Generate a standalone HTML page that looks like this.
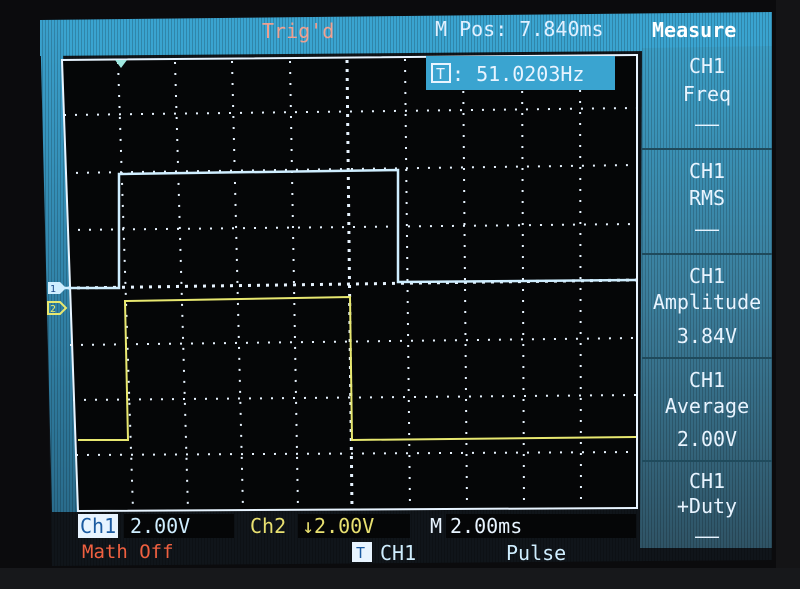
<!DOCTYPE html>
<html><head><meta charset="utf-8"><style>
html,body{margin:0;padding:0;background:#0a0a0c;}
svg{display:block}
text{font-family:"DejaVu Sans Mono","Liberation Mono",monospace;}
</style></head><body>
<svg width="800" height="589" viewBox="0 0 800 589" xmlns="http://www.w3.org/2000/svg">
<defs>
<linearGradient id="rp" x1="0" y1="0" x2="0" y2="1">
<stop offset="0" stop-color="#3a9cc4"/><stop offset="0.5" stop-color="#3b7e9c"/><stop offset="1" stop-color="#2f5466"/>
</linearGradient>
<linearGradient id="lp" x1="0" y1="0" x2="0" y2="1">
<stop offset="0" stop-color="#3aa0cc"/><stop offset="1" stop-color="#2a6c8c"/>
</linearGradient>
<pattern id="scan" width="3" height="4" patternUnits="userSpaceOnUse"><rect width="1" height="4" fill="#000" opacity="0.18"/></pattern>
</defs>
<rect width="800" height="589" fill="#0b0b0d"/>
<rect x="776" y="0" width="24" height="589" fill="#141416"/>
<rect x="0" y="568" width="800" height="21" fill="#17181b"/>
<!-- screen -->
<polygon points="40,20 772,12 772,560 52,566" fill="#10151a"/>
<polygon points="40,20 772,12 772,50 40,56" fill="#3aa4d0"/>
<polygon points="40,20 62,20 78,512 52,512" fill="url(#lp)"/>
<polygon points="642,48 772,46 772,548 640,548" fill="url(#rp)"/>
<polygon points="40,20 772,12 772,560 52,566" fill="url(#scan)"/>
<g stroke="#1f4a5c" stroke-width="2">
<line x1="642" y1="149" x2="772" y2="149"/><line x1="642" y1="254" x2="772" y2="254"/>
<line x1="642" y1="358" x2="772" y2="358"/><line x1="642" y1="461" x2="772" y2="461"/>
</g>
<!-- plot -->
<polygon points="62,60 637,55 637,508 78,511" fill="#050607" stroke="#e8f4ff" stroke-width="2"/>
<g stroke="#e8f4ff" stroke-width="2" stroke-dasharray="2 9" fill="none">
<line x1="118" y1="62" x2="133" y2="510"/><line x1="175" y1="62" x2="188" y2="510"/>
<line x1="232" y1="61" x2="243" y2="510"/><line x1="290" y1="61" x2="298" y2="510"/>
<line x1="405" y1="59" x2="410" y2="509"/><line x1="463" y1="58" x2="467" y2="509"/>
<line x1="522" y1="58" x2="524" y2="509"/><line x1="580" y1="57" x2="581" y2="509"/>
<line x1="64" y1="115" x2="636" y2="108"/><line x1="65" y1="173" x2="636" y2="165"/>
<line x1="67" y1="230" x2="636" y2="224"/><line x1="70" y1="345" x2="636" y2="338"/>
<line x1="73" y1="400" x2="636" y2="395"/><line x1="76" y1="455" x2="636" y2="452"/>
</g>
<g stroke="#e8f4ff" stroke-width="3" stroke-dasharray="3 6" fill="none">
<line x1="347" y1="60" x2="352" y2="509"/><line x1="68" y1="288" x2="636" y2="280"/>
</g>
<polyline points="64,288 119,288 119,174 398,170 398,282 636,280" fill="none" stroke="#cfeeff" stroke-width="2.5"/>
<polyline points="78,440 128,440 125,301 350,297 352,440 636,437" fill="none" stroke="#e8e870" stroke-width="2"/>
<polygon points="115,60 127,60 121,68" fill="#9fe8e0"/>
<polygon points="48,282 60,282 66,288 60,294 48,294" fill="#cfeeff"/>
<text x="50" y="292" font-size="10" fill="#1a4a8a">1</text>
<polygon points="48,302 60,302 66,308 60,314 48,314" fill="none" stroke="#e8e870" stroke-width="2"/>
<text x="50" y="312" font-size="10" fill="#e8e870">2</text>
<rect x="426" y="56" width="189" height="34" fill="#3aa4d0"/>
<rect x="432" y="64" width="18" height="18" fill="none" stroke="#e8f4ff" stroke-width="2"/>
<text x="436" y="79" font-size="15" fill="#e8f4ff">T</text>
<text x="452" y="81" font-size="20" fill="#e8f4ff">: 51.0203Hz</text>
<text x="262" y="38" font-size="20" fill="#f0a090">Trig'd</text>
<text x="435" y="36" font-size="20" fill="#e0f0ff">M Pos: 7.840ms</text>
<text x="652" y="37" font-size="20" font-weight="bold" fill="#ffffff">Measure</text>
<g font-size="20" fill="#e8f4ff" text-anchor="middle">
<text x="707" y="73">CH1</text><text x="707" y="101">Freq</text><text x="707" y="131">——</text>
<text x="707" y="178">CH1</text><text x="707" y="205">RMS</text><text x="707" y="236">——</text>
<text x="707" y="283">CH1</text><text x="707" y="309">Amplitude</text><text x="707" y="343">3.84V</text>
<text x="707" y="387">CH1</text><text x="707" y="413">Average</text><text x="707" y="446">2.00V</text>
<text x="707" y="488">CH1</text><text x="707" y="513">+Duty</text><text x="707" y="543">——</text>
</g>
<rect x="78" y="514" width="40" height="24" fill="#e8f4ff"/>
<text x="80" y="533" font-size="20" fill="#1a5aa0">Ch1</text>
<rect x="124" y="514" width="110" height="24" fill="#050607"/>
<text x="130" y="533" font-size="20" fill="#cfeeff">2.00V</text>
<text x="250" y="533" font-size="20" fill="#e8e070">Ch2</text>
<rect x="298" y="514" width="112" height="24" fill="#050607"/>
<text x="302" y="533" font-size="20" fill="#e8e070">↓2.00V</text>
<text x="430" y="533" font-size="20" fill="#e8f4ff">M</text>
<rect x="446" y="514" width="190" height="24" fill="#050607"/>
<text x="450" y="533" font-size="20" fill="#e8f4ff">2.00ms</text>
<text x="82" y="558" font-size="19" fill="#f06040">Math Off</text>
<rect x="352" y="542" width="20" height="20" fill="#e8f4ff"/>
<text x="356" y="558" font-size="15" fill="#1a5aa0">T</text>
<text x="380" y="560" font-size="20" fill="#cfeeff">CH1</text>
<text x="506" y="560" font-size="20" fill="#cfeeff">Pulse</text>
</svg>
</body></html>
